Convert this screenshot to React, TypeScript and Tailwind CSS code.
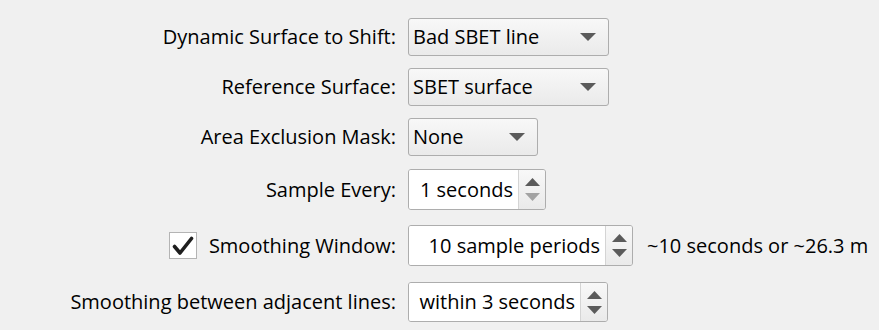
import type { ReactNode } from "react";

function Down({ color = "#5b5b5b", w = 16, h = 8 }: { color?: string; w?: number; h?: number }) {
  return (
    <svg width={w} height={h} viewBox={`0 0 ${w} ${h}`}>
      <polygon points={`0,0 ${w},0 ${w / 2},${h}`} fill={color} />
    </svg>
  );
}

function Up({ color = "#5b5b5b", w = 15, h = 8 }: { color?: string; w?: number; h?: number }) {
  return (
    <svg width={w} height={h} viewBox={`0 0 ${w} ${h}`}>
      <polygon points={`0,${h} ${w},${h} ${w / 2},0`} fill={color} />
    </svg>
  );
}

function Combo({ value, width }: { value: string; width: string }) {
  return (
    <div
      className={`${width} flex h-full items-center justify-between rounded-[3px] border border-[#adadad] bg-gradient-to-b from-[#f8f8f8] to-[#eaeaea] pl-[4px] pr-[12px]`}
    >
      <span>{value}</span>
      <Down />
    </div>
  );
}

function Spin({ value, width, downDisabled }: { value: string; width: string; downDisabled?: boolean }) {
  return (
    <div className={`${width} flex h-full overflow-hidden rounded-[3px] border border-[#adadad]`}>
      <div className="flex flex-1 items-center justify-end bg-white pr-[5px]">{value}</div>
      <div className="flex w-[27px] flex-col items-center justify-center gap-[7px] border-l border-[#d4d4d4] bg-gradient-to-b from-[#f8f8f8] to-[#eaeaea]">
        <Up />
        <Down w={15} color={downDisabled ? "#a3a3a3" : "#5b5b5b"} />
      </div>
    </div>
  );
}

function Row({ label, children, className }: { label: ReactNode; children: ReactNode; className: string }) {
  return (
    <div className={`flex items-center ${className}`}>
      <div className="flex w-[396px] items-center justify-end">{label}</div>
      <div className="ml-[12px] flex h-full items-center">{children}</div>
    </div>
  );
}

export default function App() {
  return (
    <div className="h-[330px] w-[879px] bg-[#f0f0f0] pt-[18px] font-['Open_Sans',sans-serif] text-[20px] leading-none text-black">
      <Row label="Dynamic Surface to Shift:" className="h-[38px]">
        <Combo value="Bad SBET line" width="w-[201px]" />
      </Row>
      <Row label="Reference Surface:" className="mt-[12px] h-[38px]">
        <Combo value="SBET surface" width="w-[201px]" />
      </Row>
      <Row label="Area Exclusion Mask:" className="mt-[12px] h-[38px]">
        <Combo value="None" width="w-[130px]" />
      </Row>
      <Row label="Sample Every:" className="mt-[13px] h-[41px]">
        <Spin value="1 seconds" width="w-[138px]" downDisabled />
      </Row>
      <Row
        label={
          <>
            <div className="mr-[12px] flex h-[27px] w-[28px] items-center justify-center border border-[#b4b4b4] bg-white">
              <svg width="22" height="20" viewBox="0 0 22 20">
                <path d="M2.5 10.5 L8 17 L19.5 2.5" fill="none" stroke="#1e1e1e" strokeWidth="3.6" strokeLinecap="round" strokeLinejoin="round" />
              </svg>
            </div>
            <span>Smoothing Window:</span>
          </>
        }
        className="mt-[15px] h-[41px]"
      >
        <Spin value="10 sample periods" width="w-[225px]" />
        <span className="ml-[14px]">~10 seconds or ~26.3 m</span>
      </Row>
      <Row label="Smoothing between adjacent lines:" className="mt-[16px] h-[40px]">
        <Spin value="within 3 seconds" width="w-[200px]" />
      </Row>
    </div>
  );
}
